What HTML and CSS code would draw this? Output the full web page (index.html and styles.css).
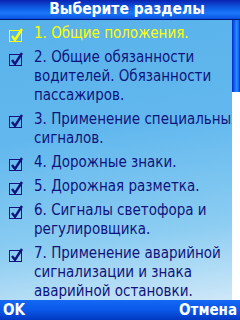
FILE: index.html
```html
<!DOCTYPE html>
<html lang="ru">
<head>
    <meta charset="UTF-8" />
    <meta name="viewport" content="width=device-width, initial-scale=1.0" />
    <title>Выберите разделы</title>
    <link rel="stylesheet" href="styles.css">
</head>

<body>
    <div class="screen">
        <!-- Title bar -->
        <div class="titlebar">Выберите разделы</div>

        <!-- Checklist + scrollbar -->
        <div class="main">
            <ul class="list">
                <li class="item selected">
                    <svg class="check" viewBox="0 0 16 16"><rect x="0.5" y="3.5" width="12" height="11" /><path d="M3 9 L6 13 L13 2" /></svg>
                    <span class="text">1. Общие положения.</span>
                </li>
                <li class="item">
                    <svg class="check" viewBox="0 0 16 16"><rect x="0.5" y="3.5" width="12" height="11" /><path d="M3 9 L6 13 L13 2" /></svg>
                    <span class="text">2. Общие обязанности<br>водителей. Обязанности<br>пассажиров.</span>
                </li>
                <li class="item">
                    <svg class="check" viewBox="0 0 16 16"><rect x="0.5" y="3.5" width="12" height="11" /><path d="M3 9 L6 13 L13 2" /></svg>
                    <span class="text">3. Применение специальных<br>сигналов.</span>
                </li>
                <li class="item">
                    <svg class="check" viewBox="0 0 16 16"><rect x="0.5" y="3.5" width="12" height="11" /><path d="M3 9 L6 13 L13 2" /></svg>
                    <span class="text">4. Дорожные знаки.</span>
                </li>
                <li class="item">
                    <svg class="check" viewBox="0 0 16 16"><rect x="0.5" y="3.5" width="12" height="11" /><path d="M3 9 L6 13 L13 2" /></svg>
                    <span class="text">5. Дорожная разметка.</span>
                </li>
                <li class="item">
                    <svg class="check" viewBox="0 0 16 16"><rect x="0.5" y="3.5" width="12" height="11" /><path d="M3 9 L6 13 L13 2" /></svg>
                    <span class="text">6. Сигналы светофора и<br>регулировщика.</span>
                </li>
                <li class="item">
                    <svg class="check" viewBox="0 0 16 16"><rect x="0.5" y="3.5" width="12" height="11" /><path d="M3 9 L6 13 L13 2" /></svg>
                    <span class="text">7. Применение аварийной<br>сигнализации и знака<br>аварийной остановки.</span>
                </li>
            </ul>
            <div class="scrollbar"><div class="thumb"></div></div>
        </div>

        <!-- Softkeys -->
        <div class="softkeys">
            <span>OK</span>
            <span>Отмена</span>
        </div>
    </div>
</body>
</html>
```

FILE: styles.css
```css
/* Reset */
body {
    margin: 0;
    padding: 0;
    font-family: "DejaVu Sans Condensed", "DejaVu Sans", sans-serif;
}

.screen {
    width: 240px;
    height: 320px;
    display: flex;
    flex-direction: column;
    overflow: hidden;
}

/* Title bar */
.titlebar {
    height: 20px;
    box-sizing: border-box;
    border-bottom: 1px solid #001878;
    padding-left: 14px;
    background: linear-gradient(#0a22b0 0%, #1060e8 45%, #1a78f8 70%, #0c50e0 100%);
    color: #fff;
    font-weight: bold;
    font-size: 15.5px;
    line-height: 19px;
    text-align: center;
}

/* Content area */
.main {
    flex: 1;
    display: flex;
    overflow: hidden;
    background: linear-gradient(172deg, #58b2ea 0%, #62b8ee 40%, #8ccdf2 75%, #cfe8f8 100%);
}

.list {
    flex: 1;
    list-style: none;
    margin: 0;
    padding: 4px 0 0 0;
    overflow: hidden;
}

.item {
    display: flex;
    align-items: flex-start;
    margin-bottom: 5px;
    color: #10147c;
    font-size: 15px;
    line-height: 19px;
}

.text {
    white-space: nowrap;
    padding-left: 9px;
}

.check {
    width: 16px;
    height: 16px;
    flex: none;
    margin: 3px 0 0 9px;
}

.check rect {
    fill: none;
    stroke: #10147c;
    stroke-width: 1;
}

.check path {
    fill: none;
    stroke: #10147c;
    stroke-width: 2.4;
    stroke-linejoin: miter;
}

.selected {
    color: #ffff00;
}

.selected .check rect,
.selected .check path {
    stroke: #ffff00;
}

/* Scrollbar */
.scrollbar {
    width: 8px;
    flex: none;
    background: #fff;
}

.thumb {
    height: 72px;
    background: linear-gradient(90deg, #0028c8 0%, #1060f0 30%, #2a8cff 60%, #1060f0 85%, #0020a0 100%);
}

/* Softkeys */
.softkeys {
    height: 20px;
    display: flex;
    justify-content: space-between;
    padding: 0 3px;
    background: linear-gradient(#1468f4 0%, #0a58e8 50%, #0038c0 100%);
    color: #fff;
    font-weight: bold;
    font-size: 15px;
    line-height: 21px;
}
```
